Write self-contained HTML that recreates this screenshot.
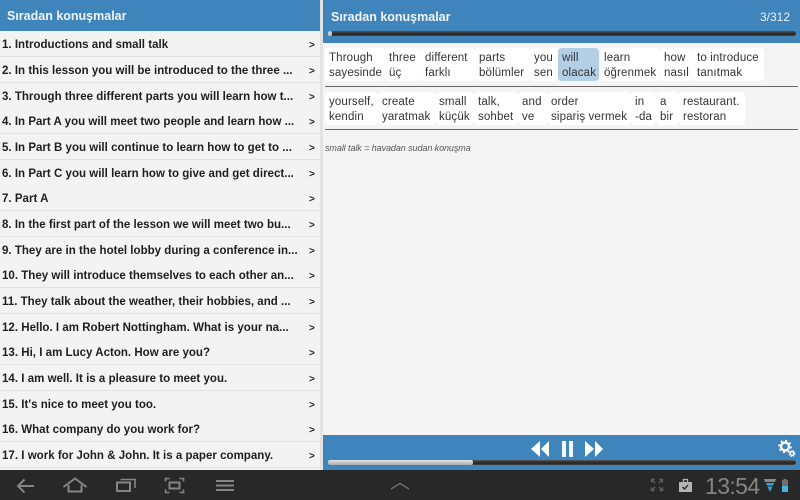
<!DOCTYPE html>
<html><head><meta charset="utf-8">
<style>
html,body{margin:0;padding:0;background:#f4f4f4}
#p{position:relative;width:800px;height:500px;overflow:hidden;background:#f4f4f4;font-family:"Liberation Sans","DejaVu Sans",sans-serif}
#p div,#p span{position:absolute;white-space:nowrap}
.h{background:#3f84bb}
.ht{color:#f0f5f9;font-weight:bold;font-size:12.5px;line-height:16px}
.r{left:0;width:320px;height:25px;border-bottom:1px solid #e2e2e2;background:#f3f3f3}
.t{left:2px;top:7px;font-weight:bold;font-size:11.5px;line-height:15px;letter-spacing:.02px;color:#1e1e1e}
.a{left:309px;top:7px;font-weight:bold;font-size:10px;line-height:15px;color:#222}
.w{background:#fff;border-radius:4px;height:33px;color:#333;font-size:11.5px;line-height:15px}
.w span{left:4px;letter-spacing:.14px}
.w .u{top:2.5px}.w .l{top:17.5px}
.hr{left:325px;width:473px;height:1px;background:#666}
</style></head><body><div id="p">
<div class="h" style="left:0;top:0;width:320px;height:31px"></div>
<div class="ht" style="left:7px;top:8px">Sıradan konuşmalar</div>
<div style="left:320px;top:0;width:3px;height:470px;background:#e3e3e3"></div>

<div class="r" style="top:31px"><span class="t">1. Introductions and small talk</span><span class="a">&gt;</span></div>
<div class="r" style="top:57px"><span class="t">2. In this lesson you will be introduced to the three ...</span><span class="a">&gt;</span></div>
<div class="r" style="top:82.6px"><span class="t">3. Through three different parts you will learn how t...</span><span class="a">&gt;</span></div>
<div class="r" style="top:108.3px"><span class="t">4. In Part A you will meet two people and learn how ...</span><span class="a">&gt;</span></div>
<div class="r" style="top:134px"><span class="t">5. In Part B you will continue to learn how to get to ...</span><span class="a">&gt;</span></div>
<div class="r" style="top:159.6px"><span class="t">6. In Part C you will learn how to give and get direct...</span><span class="a">&gt;</span></div>
<div class="r" style="top:185.3px"><span class="t">7. Part A</span><span class="a">&gt;</span></div>
<div class="r" style="top:211px"><span class="t">8. In the first part of the lesson we will meet two bu...</span><span class="a">&gt;</span></div>
<div class="r" style="top:236.6px"><span class="t">9. They are in the hotel lobby during a conference in...</span><span class="a">&gt;</span></div>
<div class="r" style="top:262.3px"><span class="t">10. They will introduce themselves to each other an...</span><span class="a">&gt;</span></div>
<div class="r" style="top:288px"><span class="t">11. They talk about the weather, their hobbies, and ...</span><span class="a">&gt;</span></div>
<div class="r" style="top:313.6px"><span class="t">12. Hello. I am Robert Nottingham. What is your na...</span><span class="a">&gt;</span></div>
<div class="r" style="top:339.3px"><span class="t">13. Hi, I am Lucy Acton. How are you?</span><span class="a">&gt;</span></div>
<div class="r" style="top:365px"><span class="t">14. I am well. It is a pleasure to meet you.</span><span class="a">&gt;</span></div>
<div class="r" style="top:390.6px"><span class="t">15. It's nice to meet you too.</span><span class="a">&gt;</span></div>
<div class="r" style="top:416.3px"><span class="t">16. What company do you work for?</span><span class="a">&gt;</span></div>
<div class="r" style="top:442px"><span class="t">17. I work for John &amp; John. It is a paper company.</span><span class="a">&gt;</span></div>

<div class="h" style="left:323px;top:0;width:477px;height:43px"></div>
<div class="ht" style="left:331px;top:9px">Sıradan konuşmalar</div>
<div class="ht" style="left:760px;top:9px;font-weight:normal;font-size:12px;color:#e6eff6">3/312</div>
<div style="left:328px;top:31px;width:468px;height:5px;border-radius:3px;background:linear-gradient(#555,#222 60%,#444)"></div>
<div style="left:328px;top:31px;width:4px;height:5px;border-radius:2px;background:#ccc"></div>

<div class="w" style="left:325px;top:48px;width:60px"><span class="u">Through</span><span class="l">sayesinde</span></div>
<div class="w" style="left:385px;top:48px;width:36px"><span class="u">three</span><span class="l">üç</span></div>
<div class="w" style="left:421px;top:48px;width:54px"><span class="u">different</span><span class="l">farklı</span></div>
<div class="w" style="left:475px;top:48px;width:55px"><span class="u">parts</span><span class="l">bölümler</span></div>
<div class="w" style="left:530px;top:48px;width:28px"><span class="u">you</span><span class="l">sen</span></div>
<div class="w" style="left:558px;top:48px;width:41px;background:#b3cfe5"><span class="u">will</span><span class="l">olacak</span></div>
<div class="w" style="left:600px;top:48px;width:60px"><span class="u">learn</span><span class="l">öğrenmek</span></div>
<div class="w" style="left:660px;top:48px;width:33px"><span class="u">how</span><span class="l">nasıl</span></div>
<div class="w" style="left:693px;top:48px;width:71px"><span class="u">to introduce</span><span class="l">tanıtmak</span></div>
<div class="hr" style="top:86px"></div>

<div class="w" style="left:325px;top:92px;width:53px"><span class="u">yourself,</span><span class="l">kendin</span></div>
<div class="w" style="left:378px;top:92px;width:57px"><span class="u">create</span><span class="l">yaratmak</span></div>
<div class="w" style="left:435px;top:92px;width:39px"><span class="u">small</span><span class="l">küçük</span></div>
<div class="w" style="left:474px;top:92px;width:44px"><span class="u">talk,</span><span class="l">sohbet</span></div>
<div class="w" style="left:518px;top:92px;width:29px"><span class="u">and</span><span class="l">ve</span></div>
<div class="w" style="left:547px;top:92px;width:84px"><span class="u">order</span><span class="l">sipariş vermek</span></div>
<div class="w" style="left:631px;top:92px;width:25px"><span class="u">in</span><span class="l">-da</span></div>
<div class="w" style="left:656px;top:92px;width:23px"><span class="u">a</span><span class="l">bir</span></div>
<div class="w" style="left:679px;top:92px;width:66px"><span class="u">restaurant.</span><span class="l">restoran</span></div>
<div class="hr" style="top:129px"></div>

<div style="left:325px;top:142px;font-style:italic;font-size:9px;line-height:12px;color:#555;letter-spacing:-.08px">small talk = havadan sudan konuşma</div>

<div class="h" style="left:323px;top:435px;width:477px;height:35px"></div>
<div style="left:328px;top:460px;width:468px;height:5px;border-radius:3px;background:linear-gradient(#555,#222 60%,#444)"></div>
<div style="left:328px;top:460px;width:145px;height:5px;border-radius:2px;background:linear-gradient(#e4e4e4,#aaa)"></div>
<svg style="position:absolute;left:528px;top:440px" width="80" height="20" viewBox="0 0 80 20">
<path d="M3 9L12 1V17ZM13 9L21 1V17Z" fill="#fff"/>
<path d="M34 1h4v16h-4zM41 1h4v16h-4z" fill="#f2f6fa"/>
<path d="M57 1L66 9L57 17ZM67 1L75 9L67 17Z" fill="#fff"/>
</svg>
<svg style="position:absolute;left:776px;top:438px" width="24" height="24" viewBox="0 0 24 24">
<circle cx="9" cy="8.5" r="4" fill="none" stroke="#fff" stroke-width="2.4"/>
<circle cx="9" cy="8.5" r="6" fill="none" stroke="#fff" stroke-width="1.6" stroke-dasharray="2 2.71"/>
<circle cx="16" cy="15.5" r="1.8" fill="none" stroke="#fff" stroke-width="1.3"/>
<circle cx="16" cy="15.5" r="3" fill="none" stroke="#fff" stroke-width="1" stroke-dasharray="1.3 1.06"/>
</svg>

<div style="left:0;top:470px;width:800px;height:30px;background:#282828"></div>
<svg style="position:absolute;left:0;top:470px" width="800" height="30" viewBox="0 0 800 30">
<g fill="none" stroke="#858585" stroke-width="2">
<path d="M34 16H18M24.5 9.5L18 16L24.5 22.5"/>
<path d="M63.5 17L75 8.5L86.5 17M68.5 15V21.5H81.5V15"/>
<path d="M117 12.5H130V21H117Z"/>
<path d="M120.5 9.5H135V18" stroke-width="1.6"/>
<path d="M165.5 11.5V8.5H169.5M179.5 8.5H183.5V11.5M165.5 19.5V22.5H169.5M179.5 22.5H183.5V19.5" stroke-width="1.6"/>
<path d="M169.5 12.5H179.5V18.5H169.5Z"/>
<path d="M216 11H234M216 15.5H234M216 20H234"/>
<path d="M391 19L400 13.5L409 19" stroke="#777" stroke-width="1.3"/>
<path d="M651.5 12.5V9.5H654.5M662.5 12.5V9.5H659.5M651.5 17.5V20.5H654.5M662.5 17.5V20.5H659.5M652 10L655 13M662 10L659 13M652 20L655 17M662 20L659 17" stroke="#5e5e5e" stroke-width="1.4"/>
</g>
<path d="M679 12h13v10h-13z" fill="#b4b4b4"/>
<path d="M683.5 12v-2.5h4v2.5" fill="none" stroke="#b4b4b4" stroke-width="1.3"/>
<path d="M682.5 17l2 2 3.5-4" fill="none" stroke="#222" stroke-width="1.3"/>
<path d="M764 9H776L770 22Z" fill="#33a5de"/>
<path d="M764 9H776L775 12H765Z" fill="#8a8a8a"/>
<path d="M764 12.5H776M764 16H776" stroke="#282828" stroke-width="1"/>
<rect x="783.5" y="9" width="3" height="1" fill="#777"/>
<rect x="782" y="10" width="6" height="12" fill="#6f6f6f"/>
<rect x="782" y="16" width="6" height="6" fill="#45b2e6"/>
</svg>
<div style="left:705px;top:472px;font-size:23px;line-height:28px;color:#858585;letter-spacing:-.6px">13:54</div>
</div></body></html>
